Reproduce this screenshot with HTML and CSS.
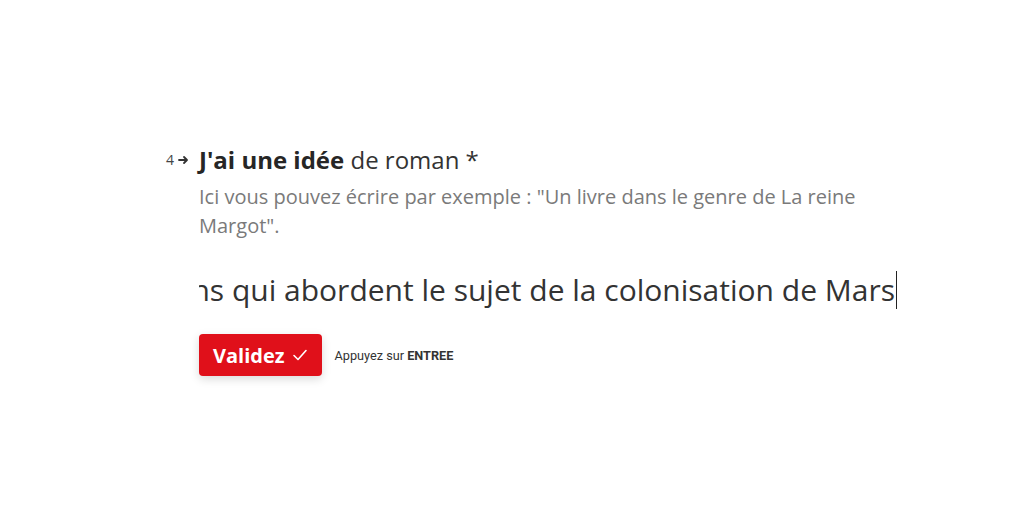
FILE: index.html
```html
<!DOCTYPE html>
<html lang="fr">
<head>
<meta charset="utf-8">
<link rel="stylesheet" href="styles.css">
</head>
<body>
<main class="page">
  <section class="question">
    <div class="counter"><span class="num">4</span><svg class="arrow" width="11" height="10" viewBox="0 0 11 10"><path d="M1 5h7.5M6 2L9 5 6 8" fill="none" stroke="#333" stroke-width="1.8" stroke-linecap="round" stroke-linejoin="round"/></svg></div>
    <div class="body">
      <h1 class="title"><strong>J'ai une idée</strong> de roman *</h1>
      <p class="desc">Ici vous pouvez écrire par exemple : "Un livre dans le genre de La reine Margot".</p>
      <div class="field">
        <div class="value"><span>J'aimerais lire des romans qui abordent le sujet de la colonisation de Mars</span><span class="caret"></span></div>
      </div>
      <div class="actions">
        <button class="btn">Validez <svg class="check" width="16" height="14" viewBox="0 0 16 14"><path d="M2 7.5l4 4L14 2.5" fill="none" stroke="#fff" stroke-width="1.6" stroke-linecap="round" stroke-linejoin="round"/></svg></button>
        <span class="hint">Appuyez sur <b>ENTREE</b></span>
      </div>
    </div>
  </section>
</main>
</body>
</html>
```
FILE: styles.css
```css
html, body {
  margin: 0;
  padding: 0;
  background: #fff;
}
body {
  font-family: "Open Sans", "Noto Sans", sans-serif;
  color: #333;
}
.page {
  width: 1024px;
  height: 526px;
  overflow: hidden;
}
.question {
  display: flex;
  padding-top: 144px;
  padding-left: 166px;
}
.counter {
  width: 33px;
  display: flex;
  align-items: center;
  height: 32px;
  gap: 4px;
  color: #444;
}
.num {
  font-size: 14px;
  line-height: 32px;
}
.arrow {
  display: block;
}
.body {
  width: 720px;
}
.title {
  margin: 0;
  font-size: 24px;
  line-height: 32px;
  font-weight: 400;
  color: #333;
}
.title strong {
  font-weight: 700;
  color: #262626;
}
.desc {
  margin: 6px 0 0;
  font-size: 20px;
  line-height: 29px;
  color: #7a7a7a;
  width: 680px;
}
.field {
  margin-top: 31px;
  width: 698px;
  overflow: hidden;
}
.value {
  display: flex;
  justify-content: flex-end;
  align-items: center;
  white-space: nowrap;
  font-size: 30px;
  line-height: 38px;
  height: 38px;
  color: #333;
}
.value span {
  flex: none;
}
.caret {
  width: 1px;
  height: 38px;
  background: #222;
  margin-left: 1px;
}
.actions {
  margin-top: 25px;
  display: flex;
  align-items: center;
  gap: 13px;
}
.btn {
  display: flex;
  align-items: center;
  gap: 7px;
  height: 42px;
  padding: 0 14px;
  border: none;
  border-radius: 4px;
  background: #e0101a;
  color: #fff;
  font-family: "Open Sans", sans-serif;
  font-size: 20px;
  font-weight: 700;
  box-shadow: 0 3px 10px rgba(0,0,0,0.15);
}
.check {
  display: block;
}
.hint {
  font-family: Roboto, "Liberation Sans", sans-serif;
  font-size: 12.7px;
  color: #333;
}
.hint b {
  font-weight: 700;
}
```
